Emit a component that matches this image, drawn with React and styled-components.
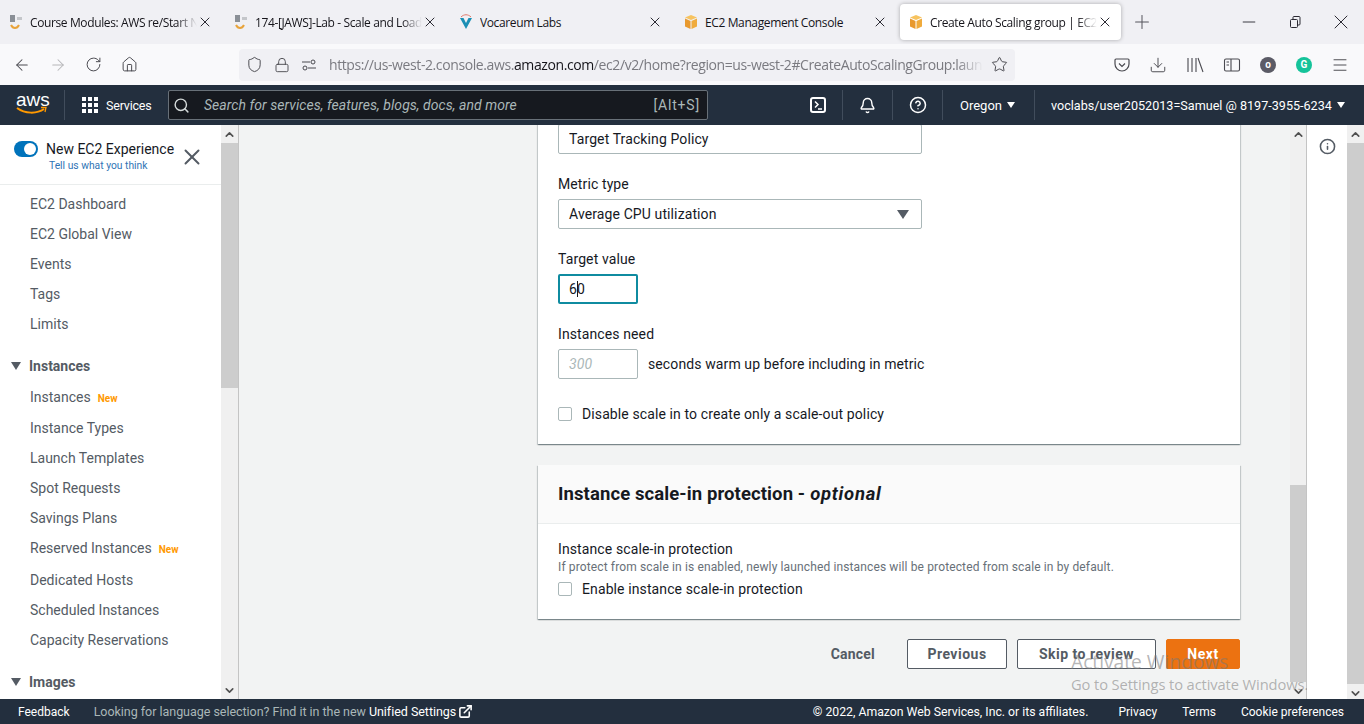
import React from 'react';
import styled, { createGlobalStyle } from 'styled-components';
import { ArrowLeft, ArrowRight, RotateCw, Home, Shield, Lock, Star, Download, Menu, X, Plus, Minus, Bell, Search, CircleHelp, ExternalLink, ChevronUp, ChevronDown, Info } from 'lucide-react';

const Global = createGlobalStyle`
    html, body { margin: 0; padding: 0; height: 100%; overflow: hidden; }
    body { font-family: Roboto, "Noto Sans", sans-serif; font-size: 14px; color: #16191f; }
    * { box-sizing: border-box; }
`

const Page = styled.div`
    width: 1364px;
    height: 724px;
    display: flex;
    flex-direction: column;
    position: relative;
    overflow: hidden;
`

/* browser chrome */
const TabStrip = styled.div`
    height: 44px;
    flex: none;
    background: #f0f0f4;
    display: flex;
    align-items: center;
    font-family: "Open Sans", sans-serif;
`
const Tab = styled.div`
    width: ${props => props.$active ? '221px' : '225px'};
    height: 36px;
    padding: ${props => props.$active ? '0 9px 0 8px' : '0 13px 0 8px'};
    display: flex;
    align-items: center;
    background: ${props => props.$active ? '#fff' : 'transparent'};
    border-radius: 4px;
    box-shadow: ${props => props.$active ? '0 0 4px rgba(0,0,0,0.3)' : 'none'};
`
const TabIcon = styled.svg`
    width: 16px;
    height: 16px;
    flex: none;
    margin-right: 6px;
`
const TabTitle = styled.span`
    flex: 1;
    min-width: 0;
    font-size: 12px;
    letter-spacing: -0.38px;
    white-space: nowrap;
    overflow: hidden;
    color: #15141a;
    mask-image: ${props => props.$fade ? 'linear-gradient(to right, #000 88%, transparent 100%)' : 'none'};
`
const TabClose = styled(X)`
    width: 16px;
    height: 16px;
    flex: none;
    color: #2b2a33;
    margin: 0 -1px 0 0;
`
const NewTab = styled(Plus)`
    width: 22px;
    height: 22px;
    color: #55545c;
    margin-left: 10px;
`
const WindowBtns = styled.div`
    margin-left: auto;
    display: flex;
    color: #2b2a33;
`
const WindowBtn = styled.div`
    width: 46px;
    display: flex;
    align-items: center;
    justify-content: center;
`
const RestoreIcon = styled.svg`
    width: 14px;
    height: 14px;
`
const Toolbar = styled.div`
    height: 41px;
    flex: none;
    background: #f9f9fb;
    display: flex;
    align-items: center;
`
const NavBtns = styled.div`
    width: 239px;
    flex: none;
    display: flex;
    align-items: center;
    padding-left: 13px;
    gap: 18px;
    color: #4a4a50;
    svg:last-child { margin-left: 1px; }
`
const UrlBar = styled.div`
    width: 776px;
    height: 32px;
    flex: none;
    background: #f0f0f4;
    border-radius: 4px;
    display: flex;
    align-items: center;
    padding: 0 7px;
    gap: 11px;
    color: #4a4a50;
    svg { flex: none; }
`
const UrlText = styled.div`
    flex: 1;
    min-width: 0;
    overflow: hidden;
    white-space: nowrap;
    font-family: "Open Sans", sans-serif;
    font-size: 14px;
    letter-spacing: -0.4px;
    color: #7a7a80;
    margin: 0 -3px 0 1px;
    mask-image: linear-gradient(to right, #000 96%, transparent 100%);
    b { font-weight: 400; color: #15141a; }
`
const ToolIcons = styled.div`
    flex: 1;
    display: flex;
    align-items: center;
    justify-content: flex-end;
    gap: 18px;
    padding-right: 15px;
    color: #4a4a50;
`
const CircleIcon = styled.div`
    width: 16px;
    height: 16px;
    border-radius: 50%;
    margin: 0 1px;
    background: ${props => props.$bg};
    color: #fff;
    font-size: 10px;
    font-weight: 700;
    display: flex;
    align-items: center;
    justify-content: center;
`

/* console header */
const ConsoleNav = styled.div`
    height: 40px;
    flex: none;
    background: #232f3e;
    display: flex;
    align-items: center;
    color: #fff;
`
const Logo = styled.div`
    width: 65px;
    height: 30px;
    flex: none;
    padding-left: 16px;
    display: flex;
    flex-direction: column;
    align-items: flex-start;
    border-right: 1px solid #414d5c;
    span {
        font-family: "Liberation Sans", sans-serif;
        font-size: 19px;
        line-height: 19px;
    }
    svg { margin-top: -3px; }
`
const ServicesBtn = styled.div`
    display: flex;
    align-items: center;
    width: 103px;
    padding-left: 17px;
    gap: 8px;
    flex: none;
    font-size: 12.5px;
    letter-spacing: -0.2px;
`
const Dots = styled.div`
    display: grid;
    grid-template-columns: repeat(3, 4px);
    grid-auto-rows: 4px;
    gap: 2px;
    i { background: #fff; display: block; }
`
const SearchBox = styled.div`
    width: 540px;
    height: 30px;
    flex: none;
    background: #16191f;
    border: 1px solid #687078;
    border-radius: 2px;
    display: flex;
    align-items: center;
    padding: 0 7px 0 4px;
    color: #d5dbdb;
    font-size: 14px;
`
const SearchHint = styled.span`
    flex: 1;
    font-style: italic;
    color: #aab7b8;
    margin-left: 14px;
    letter-spacing: 0.05px;
`
const SearchKey = styled.span`
    color: #aab7b8;
    letter-spacing: 0.8px;
`
const HeadIcon = styled.div`
    width: 50px;
    height: 30px;
    flex: none;
    display: flex;
    align-items: center;
    justify-content: center;
    border-right: 1px solid #414d5c;
    margin-left: ${props => props.$first ? '85px' : '0'};
`
const HeadMenu = styled.div`
    display: flex;
    align-items: center;
    height: 30px;
    flex: none;
    font-size: ${props => props.$size || '13px'};
    white-space: nowrap;
    gap: 5px;
    padding: ${props => props.$pad};
    border-right: ${props => props.$divider ? '1px solid #414d5c' : 'none'};
`
const Caret = styled.i`
    width: 0;
    height: 0;
    border-left: ${props => props.$half || 4}px solid transparent;
    border-right: ${props => props.$half || 4}px solid transparent;
    border-top: ${props => props.$tall || 6}px solid ${props => props.$color || '#fff'};
    flex: none;
`

/* main */
const Body = styled.div`
    flex: 1;
    min-height: 0;
    display: flex;
`
const Sidebar = styled.div`
    width: 221px;
    flex: none;
    background: #fff;
    overflow: hidden;
    color: #545b64;
`
const ExperienceRow = styled.div`
    height: 60px;
    border-bottom: 1px solid #eaeded;
    padding: 16px 0 0 14px;
    display: flex;
    position: relative;
`
const Toggle = styled.div`
    width: 24px;
    height: 16px;
    border-radius: 8px;
    background: #0073bb;
    flex: none;
    display: flex;
    justify-content: flex-end;
    align-items: center;
    padding-right: 2px;
    i { width: 12px; height: 12px; border-radius: 50%; background: #fff; display: block; }
`
const ExperienceText = styled.div`
    margin-left: 8px;
    color: #16191f;
    font-size: 14px;
    line-height: 16px;
    small {
        display: block;
        font-size: 10.3px;
        line-height: 18px;
        color: #2f74b5;
        margin-left: 3px;
    }
`
const CloseExperience = styled(X)`
    position: absolute;
    left: 179px;
    top: 19px;
    width: 26px;
    height: 26px;
    color: #545b64;
`
const NavList = styled.div`
    padding-top: 4px;
`
const NavItem = styled.div`
    height: ${props => props.$height || 30}px;
    line-height: 30px;
    padding-left: 30px;
    font-size: 14px;
    white-space: nowrap;
    em {
        font-style: normal;
        font-weight: 700;
        font-size: 10px;
        color: #ff9900;
        margin-left: 7px;
    }
`
const NavSection = styled.div`
    height: 30px;
    margin-top: ${props => props.$top}px;
    margin-bottom: 1px;
    display: flex;
    align-items: center;
    gap: 8px;
    padding-left: 11px;
    font-weight: 700;
    font-size: 14px;
`
const ScrollBar = styled.div`
    width: ${props => props.$width}px;
    flex: none;
    background: #f0f0f0;
    display: flex;
    flex-direction: column;
    align-items: stretch;
    border-right: ${props => props.$line ? '1px solid #c4c4c4' : 'none'};
`
const ScrollArrow = styled.div`
    height: 18px;
    flex: none;
    display: flex;
    align-items: center;
    justify-content: center;
    color: #505050;
`
const ScrollThumb = styled.div`
    flex: none;
    height: ${props => props.$height}px;
    margin-top: ${props => props.$top || 0}px;
    background: #cdcdcd;
`
const ScrollRest = styled.div`
    flex: 1;
`
const Content = styled.div`
    flex: 1;
    min-width: 0;
    background: #f2f3f3;
    overflow: hidden;
    padding: 0 50px 0 299px;
    letter-spacing: 0.11px;
`
const Card = styled.div`
    background: #fff;
    box-shadow: 0 1px 1px 0 rgba(0,28,36,.3), 1px 1px 1px 0 rgba(0,28,36,.15), -1px 1px 1px 0 rgba(0,28,36,.15);
    margin-bottom: ${props => props.$gap || 0}px;
`
const CardBody = styled.div`
    padding: ${props => props.$pad};
`
const CardHeader = styled.div`
    height: 59px;
    background: #fafafa;
    border-bottom: 1px solid #eaeded;
    padding: 0 20px;
    display: flex;
    align-items: center;
    font-size: 18.5px;
    letter-spacing: 0.1px;
    font-weight: 700;
    gap: 5px;
    em { font-style: italic; letter-spacing: 0.7px; }
`
const Field = styled.div`
    margin-top: 20px;
`
const Label = styled.div`
    height: 20px;
    line-height: 20px;
    font-size: 14px;
    margin-bottom: ${props => props.$tight ? '0' : '5px'};
`
const Description = styled.div`
    font-size: 12px;
    line-height: 16px;
    letter-spacing: 0.13px;
    color: #687078;
`
const TextBox = styled.div`
    height: 30px;
    width: ${props => props.$width};
    margin-top: ${props => props.$top || 0};
    border: 1px solid #aab7b8;
    border-radius: 2px;
    background: #fff;
    display: flex;
    align-items: center;
    justify-content: space-between;
    padding: 0 12px 0 10px;
    flex: none;
`
const FocusBox = styled(TextBox)`
    border: 2px solid #0f8ba0;
    padding-left: 9px;
    justify-content: flex-start;
`
const TextCaret = styled.i`
    display: inline-block;
    width: 1px;
    height: 16px;
    margin: 0 -1px 0 0;
    background: #16191f;
`
const Placeholder = styled.span`
    font-style: italic;
    color: #aab7b8;
`
const InlineRow = styled.div`
    display: flex;
    align-items: center;
    gap: 10px;
`
const CheckRow = styled.div`
    height: 20px;
    margin-top: ${props => props.$top}px;
    display: flex;
    align-items: center;
    gap: 10px;
    i {
        width: 14px;
        height: 14px;
        border: 1px solid #aab7b8;
        border-radius: 2px;
        background: #fff;
        display: block;
        flex: none;
    }
`
const Actions = styled.div`
    margin-top: 20px;
    display: flex;
    justify-content: flex-end;
    gap: 10px;
`
const Button = styled.div`
    height: 30px;
    width: ${props => props.$width};
    display: flex;
    align-items: center;
    font-weight: 700;
    font-size: 14px;
    letter-spacing: ${props => props.$plain ? '0.2px' : '0.5px'};
    color: ${props => props.$primary ? '#fff' : '#545b64'};
    background: ${props => props.$primary ? '#ec7211' : props.$plain ? 'transparent' : '#fff'};
    border: ${props => props.$plain ? 'none' : props.$primary ? '1px solid #ec7211' : '1px solid #545b64'};
    border-radius: 2px;
    padding-right: ${props => props.$plain ? '22px' : '0'};
    justify-content: ${props => props.$plain ? 'flex-end' : 'center'};
`
const InfoPanel = styled.div`
    width: 40px;
    flex: none;
    background: #fff;
    display: flex;
    justify-content: center;
    padding-top: 13px;
    color: #545b64;
`

/* footer */
const Footer = styled.div`
    height: 25px;
    flex: none;
    background: #232f3e;
    color: #fff;
    display: flex;
    align-items: center;
    font-size: 12px;
    padding: 0 20px 0 18px;
    white-space: nowrap;
`
const FooterNote = styled.span`
    color: #aab7b8;
    font-size: 12.5px;
    letter-spacing: -0.03px;
    margin-left: 24px;
    display: flex;
    align-items: center;
    b { color: #fff; font-weight: 400; margin-left: 3px; }
    svg { margin-left: 2px; color: #fff; }
`
const FooterLinks = styled.div`
    margin-left: auto;
    display: flex;
    gap: 25px;
`
const Copyright = styled.span`
    font-size: 12.25px;
    margin-right: 5px;
`

/* windows watermark */
const Watermark = styled.div`
    position: absolute;
    left: 1071px;
    top: 650px;
    width: 236px;
    overflow: hidden;
    white-space: nowrap;
    font-family: "Open Sans", sans-serif;
    color: rgba(120, 120, 120, 0.55);
    pointer-events: none;
    div { font-size: 19.2px; line-height: 24px; }
    p { margin: 0; font-size: 14.7px; line-height: 20px; letter-spacing: -0.1px; }
`

const AwsFavicon = () => (
    <TabIcon viewBox="0 0 16 16">
        <rect x="2" y="1" width="5" height="7" fill="#8a8f96" />
        <rect x="9" y="3" width="5" height="3" fill="#c4c6ca" />
        <path d="M3 11 C5 15 9 15 11 11" fill="none" stroke="#e8a33a" strokeWidth="2" />
    </TabIcon>
)
const VocareumFavicon = () => (
    <TabIcon viewBox="0 0 16 16">
        <path d="M3 3 C6 0 10 0 13 3" fill="none" stroke="#e0796a" strokeWidth="1" />
        <path d="M2 4 L8 15 L14 4 L10.5 4 L8 9 L5.5 4 Z" fill="#1b8fb5" />
    </TabIcon>
)
const BoxFavicon = () => (
    <TabIcon viewBox="0 0 16 16">
        <path d="M8 1 L14 3.5 L8 6 L2 3.5 Z" fill="#f7c35f" />
        <path d="M2 4.5 L7.5 7 L7.5 15 L2 12.5 Z" fill="#e8992e" />
        <path d="M14 4.5 L8.5 7 L8.5 15 L14 12.5 Z" fill="#f0ab3c" />
    </TabIcon>
)

const tabs = [
    { title: 'Course Modules: AWS re/Start N', icon: AwsFavicon, fade: true },
    { title: '174-[JAWS]-Lab - Scale and Load Balance', icon: AwsFavicon, fade: true },
    { title: 'Vocareum Labs', icon: VocareumFavicon },
    { title: 'EC2 Management Console', icon: BoxFavicon },
    { title: 'Create Auto Scaling group | EC2 Management', icon: BoxFavicon, fade: true, active: true },
]

const topItems = ['EC2 Dashboard', 'EC2 Global View', 'Events', 'Tags', 'Limits']
const instanceItems = [
    { name: 'Instances', isNew: true, height: 31 },
    { name: 'Instance Types' },
    { name: 'Launch Templates' },
    { name: 'Spot Requests' },
    { name: 'Savings Plans' },
    { name: 'Reserved Instances', isNew: true, height: 32 },
    { name: 'Dedicated Hosts' },
    { name: 'Scheduled Instances' },
    { name: 'Capacity Reservations' },
]

const SectionCaret = () => <Caret $half={5} $tall={8} $color="#545b64" />

const PageScrollBar = ({ width, line, top, height }) => (
    <ScrollBar $width={width} $line={line}>
        <ScrollArrow><ChevronUp size={13} strokeWidth={3} /></ScrollArrow>
        <ScrollThumb $height={height} $top={top} />
        <ScrollRest />
        <ScrollArrow><ChevronDown size={13} strokeWidth={3} /></ScrollArrow>
    </ScrollBar>
)

const App = () => {
    return (
        <Page>
            <Global />
            <TabStrip>
                {tabs.map((tab, i) => {
                    const Icon = tab.icon
                    return (
                        <Tab key={i} $active={tab.active}>
                            <Icon />
                            <TabTitle $fade={tab.fade}>{tab.title}</TabTitle>
                            <TabClose strokeWidth={1.5} />
                        </Tab>
                    )
                })}
                <NewTab strokeWidth={1.1} />
                <WindowBtns>
                    <WindowBtn><Minus size={20} strokeWidth={1.1} /></WindowBtn>
                    <WindowBtn>
                        <RestoreIcon viewBox="0 0 14 14" fill="none" stroke="currentColor">
                            <rect x="2.5" y="4.5" width="7" height="8" rx="1" />
                            <path d="M5 4 V2.5 a1 1 0 0 1 1-1 H11 a1 1 0 0 1 1 1 V9 a1 1 0 0 1-1 1 H10" />
                        </RestoreIcon>
                    </WindowBtn>
                    <WindowBtn><X size={24} strokeWidth={1} /></WindowBtn>
                </WindowBtns>
            </TabStrip>

            <Toolbar>
                <NavBtns>
                    <ArrowLeft size={18} strokeWidth={1.4} />
                    <ArrowRight size={18} strokeWidth={1.4} color="#b5b5b8" />
                    <RotateCw size={17} strokeWidth={1.4} />
                    <Home size={17} strokeWidth={1.4} />
                </NavBtns>
                <UrlBar>
                    <Shield size={17} strokeWidth={1.4} />
                    <Lock size={16} strokeWidth={1.4} />
                    <svg width="16" height="16" viewBox="0 0 16 16" fill="none" stroke="currentColor">
                        <path d="M1 5 H9 M7 11 H15" />
                        <circle cx="12" cy="5" r="2" />
                        <circle cx="4" cy="11" r="2" />
                    </svg>
                    <UrlText>https://us-west-2.console.aws.<b>amazon.com</b>/ec2/v2/home?region=us-west-2#CreateAutoScalingGroup:launch</UrlText>
                    <Star size={17} strokeWidth={1.4} />
                </UrlBar>
                <ToolIcons>
                    <svg width="18" height="18" viewBox="0 0 18 18" fill="none" stroke="currentColor" strokeWidth="1.2">
                        <path d="M3 3 H15 a1 1 0 0 1 1 1 V8 a7 7 0 0 1-14 0 V4 a1 1 0 0 1 1-1 Z" />
                        <path d="M6 7.5 L9 10.5 L12 7.5" />
                    </svg>
                    <Download size={18} strokeWidth={1.3} />
                    <svg width="20" height="18" viewBox="0 0 20 18" fill="none" stroke="currentColor" strokeWidth="1.1">
                        <path d="M3 2 V16 M7 2 V16 M11 2 V16 M13 2 L18 16" />
                    </svg>
                    <svg width="18" height="18" viewBox="0 0 18 18" fill="none" stroke="currentColor" strokeWidth="1.1">
                        <rect x="1.5" y="3" width="15" height="12" rx="1.5" />
                        <path d="M8 3 V15 M3.5 6 H6 M3.5 9 H6" />
                    </svg>
                    <CircleIcon $bg="#5b5b66">o</CircleIcon>
                    <CircleIcon $bg="#15c39a">G</CircleIcon>
                    <Menu size={18} strokeWidth={1.3} />
                </ToolIcons>
            </Toolbar>

            <ConsoleNav>
                <Logo>
                    <span>aws</span>
                    <svg width="32" height="10" viewBox="0 0 32 10" fill="none">
                        <path d="M1 2 C9 8 21 8 28 3" stroke="#ff9900" strokeWidth="2" />
                        <path d="M25 1.5 L30 1.5 L29 6" stroke="#ff9900" strokeWidth="1.3" />
                    </svg>
                </Logo>
                <ServicesBtn>
                    <Dots>{Array.from({ length: 9 }).map((_, i) => <i key={i} />)}</Dots>
                    Services
                </ServicesBtn>
                <SearchBox>
                    <Search size={17} strokeWidth={2} />
                    <SearchHint>Search for services, features, blogs, docs, and more</SearchHint>
                    <SearchKey>[Alt+S]</SearchKey>
                </SearchBox>
                <HeadIcon $first>
                    <svg width="18" height="18" viewBox="0 0 18 18" fill="none" stroke="#fff" strokeWidth="2">
                        <rect x="2" y="2" width="14" height="14" rx="2" />
                        <path d="M6 5.5 L9 8.5 L6 11.5 M9 13 H13" strokeWidth="1.5" />
                    </svg>
                </HeadIcon>
                <HeadIcon><Bell size={17} strokeWidth={2} /></HeadIcon>
                <HeadIcon><CircleHelp size={18} strokeWidth={2} /></HeadIcon>
                <HeadMenu $divider $pad="0 19px 0 17px">Oregon <Caret /></HeadMenu>
                <HeadMenu $size="12.6px" $pad="0 0 0 16px">voclabs/user2052013=Samuel @ 8197-3955-6234 <Caret /></HeadMenu>
            </ConsoleNav>

            <Body>
                <Sidebar>
                    <ExperienceRow>
                        <Toggle><i /></Toggle>
                        <ExperienceText>
                            New EC2 Experience
                            <small>Tell us what you think</small>
                        </ExperienceText>
                        <CloseExperience strokeWidth={1.8} />
                    </ExperienceRow>
                    <NavList>
                        {topItems.map(name => <NavItem key={name}>{name}</NavItem>)}
                        <NavSection $top={12}><SectionCaret /> Instances</NavSection>
                        {instanceItems.map(item => (
                            <NavItem key={item.name} $height={item.height}>
                                {item.name}{item.isNew && <em>New</em>}
                            </NavItem>
                        ))}
                        <NavSection $top={12}><SectionCaret /> Images</NavSection>
                    </NavList>
                </Sidebar>
                <PageScrollBar width={18} line height={245} />

                <Content>
                    <Card $gap={21}>
                        <CardBody $pad="0 20px 20px">
                            <TextBox $width="364px" $top="-1px">Target Tracking Policy</TextBox>
                            <Field>
                                <Label>Metric type</Label>
                                <TextBox $width="364px">Average CPU utilization <Caret $half={6} $tall={9} $color="#545b64" /></TextBox>
                            </Field>
                            <Field>
                                <Label>Target value</Label>
                                <FocusBox $width="80px">6<TextCaret />0</FocusBox>
                            </Field>
                            <Field>
                                <Label>Instances need</Label>
                                <InlineRow>
                                    <TextBox $width="80px"><Placeholder>300</Placeholder></TextBox>
                                    seconds warm up before including in metric
                                </InlineRow>
                            </Field>
                            <CheckRow $top={25}><i />Disable scale in to create only a scale-out policy</CheckRow>
                        </CardBody>
                    </Card>
                    <Card>
                        <CardHeader>Instance scale-in protection - <em>optional</em></CardHeader>
                        <CardBody $pad="15px 20px 20px">
                            <Label $tight>Instance scale-in protection</Label>
                            <Description>If protect from scale in is enabled, newly launched instances will be protected from scale in by default.</Description>
                            <CheckRow $top={4}><i />Enable instance scale-in protection</CheckRow>
                        </CardBody>
                    </Card>
                    <Actions>
                        <Button $plain>Cancel</Button>
                        <Button $width="100px">Previous</Button>
                        <Button $width="139px">Skip to review</Button>
                        <Button $width="74px" $primary>Next</Button>
                    </Actions>
                </Content>

                <PageScrollBar width={17} line height={197} top={342} />
                <InfoPanel><Info size={17} strokeWidth={2.2} /></InfoPanel>
                <PageScrollBar width={17} height={541} />
            </Body>

            <Footer>
                Feedback
                <FooterNote>
                    Looking for language selection? Find it in the new <b>Unified Settings</b>
                    <ExternalLink size={15} strokeWidth={2.5} />
                </FooterNote>
                <FooterLinks>
                    <Copyright>© 2022, Amazon Web Services, Inc. or its affiliates.</Copyright>
                    <span>Privacy</span>
                    <span>Terms</span>
                    <span>Cookie preferences</span>
                </FooterLinks>
            </Footer>

            <Watermark>
                <div>Activate Windows</div>
                <p>Go to Settings to activate Windows.</p>
            </Watermark>
        </Page>
    )
}

export default App;
